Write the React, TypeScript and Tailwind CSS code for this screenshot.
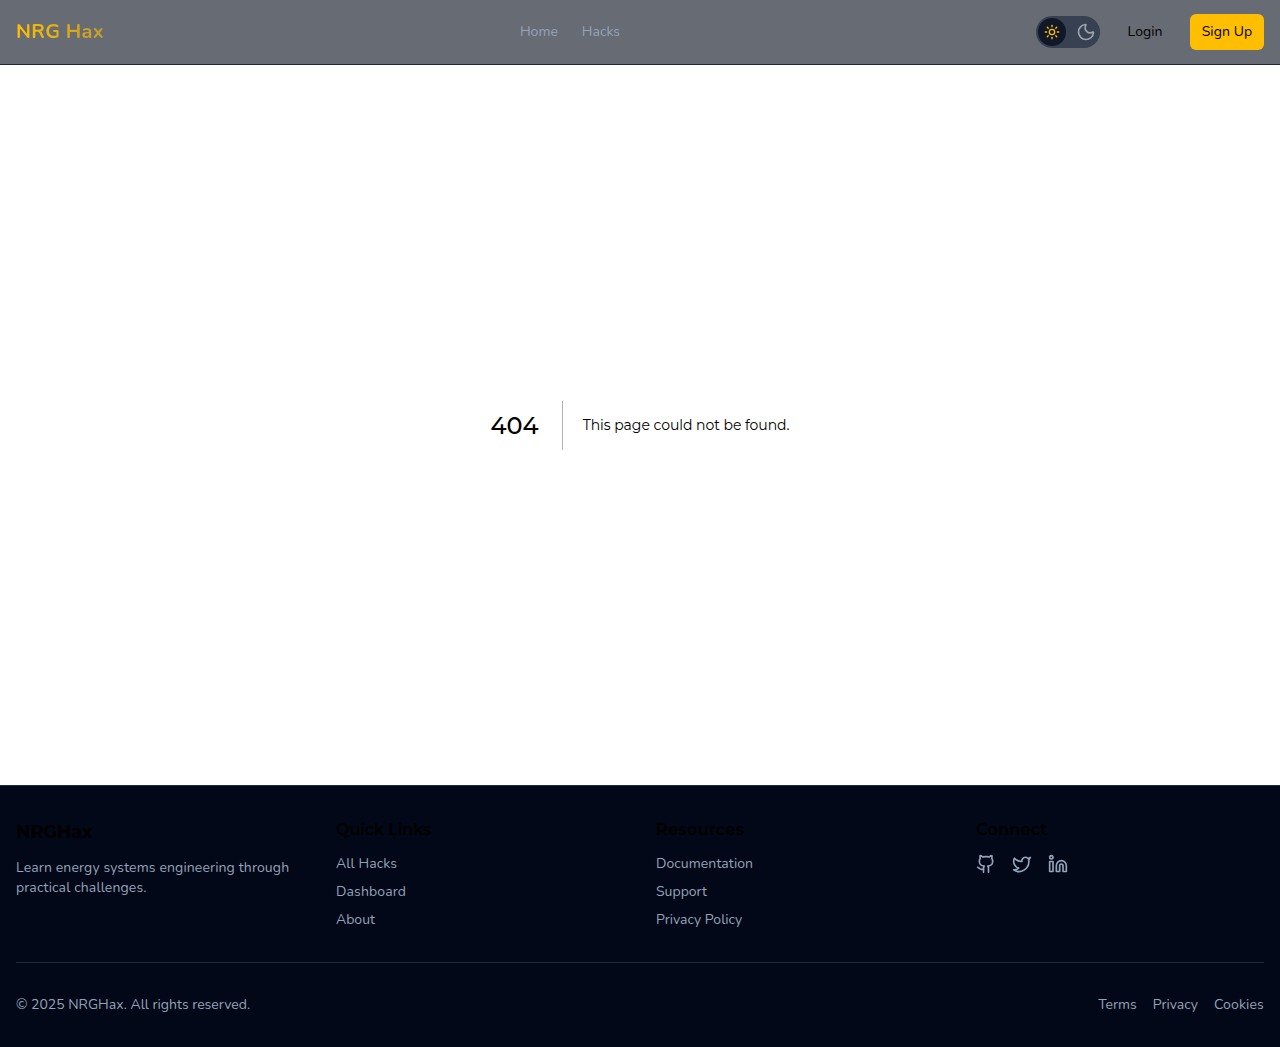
import React from 'react';
import { Github, Linkedin, Moon, Sun, Twitter } from 'lucide-react';

const columns = [
  {
    title: 'Quick Links',
    tracking: 'tracking-[-0.09px]',
    links: [
      { label: 'All Hacks', tracking: 'tracking-[0.1px]' },
      { label: 'Dashboard', tracking: 'tracking-[0.12px]' },
      { label: 'About', tracking: 'tracking-normal' },
    ],
  },
  {
    title: 'Resources',
    tracking: 'tracking-[0.36px]',
    links: [
      { label: 'Documentation', tracking: 'tracking-[0.07px]' },
      { label: 'Support', tracking: 'tracking-normal' },
      { label: 'Privacy Policy', tracking: 'tracking-normal' },
    ],
  },
];

function Header() {
  return (
    <header className="h-[65px] border-b border-[#1e293b] bg-[#676b74]">
      <div className="flex h-16 items-center justify-between px-4">
        <a href="#" className="w-[88px] whitespace-nowrap bg-gradient-to-r from-[#ffbf00] to-[#ffbf00]/60 bg-clip-text text-xl leading-7 font-bold tracking-[0.28px] text-transparent">
          NRG Hax
        </a>
        <nav className="flex items-center gap-6 text-sm text-[#94a3b8]">
          <a href="#">Home</a>
          <a href="#">Hacks</a>
        </nav>
        <div className="flex items-center gap-4">
          <button aria-label="Toggle theme" className="flex h-8 w-16 items-center rounded-full bg-[#374151] pl-0.5">
            <span className="flex size-7 items-center justify-center rounded-full bg-[#111827] text-[#ffbf00]">
              <Sun size={16} />
            </span>
            <Moon size={20} className="ml-2.5 text-[#9ca3af]" />
          </button>
          <button className="h-9 w-[58px] rounded-md text-sm text-black">Login</button>
          <button className="h-9 w-[74px] rounded-md bg-[#ffbf00] text-sm tracking-[0.1px] text-black">Sign Up</button>
        </div>
      </div>
    </header>
  );
}

function Footer() {
  return (
    <footer className="border-t border-[#1e293b] bg-[#020817] px-4 py-8 text-sm text-[#94a3b8]">
      <div className="grid grid-cols-4 gap-8">
        <div>
          <h3 className="font-[Montserrat] text-lg leading-7 font-bold tracking-[-0.3px] text-black">NRGHax</h3>
          <p className="mt-3 tracking-[0.13px]">Learn energy systems engineering through practical challenges.</p>
        </div>
        {columns.map((c) => (
          <div key={c.title}>
            <h4 className={`font-[Montserrat] text-base leading-6 font-semibold text-black ${c.tracking}`}>{c.title}</h4>
            <ul className="mt-3 space-y-2">
              {c.links.map((l) => (
                <li key={l.label} className={l.tracking}><a href="#">{l.label}</a></li>
              ))}
            </ul>
          </div>
        ))}
        <div>
          <h4 className="font-[Montserrat] text-base leading-6 font-semibold tracking-[0.25px] text-black">Connect</h4>
          <div className="mt-3 flex gap-4">
            <Github size={20} />
            <Twitter size={20} />
            <Linkedin size={20} />
          </div>
        </div>
      </div>
      <div className="mt-8 flex justify-between border-t border-[#1e293b] pt-8">
        <p>© 2025 NRGHax. All rights reserved.</p>
        <div className="flex gap-4">
          <a href="#">Terms</a>
          <a href="#">Privacy</a>
          <a href="#" className="tracking-[0.15px]">Cookies</a>
        </div>
      </div>
    </footer>
  );
}

export default function App() {
  return (
    <div className="flex min-h-screen flex-col bg-white font-[Nunito,sans-serif]">
      <Header />
      <main className="flex h-[720px] items-center justify-center font-[Montserrat,sans-serif] text-black">
        <h1 className="mr-5 border-r border-black/30 pr-[23px] text-2xl leading-[49px] font-medium">404</h1>
        <h2 className="text-sm leading-7 tracking-[-0.04px]">This page could not be found.</h2>
      </main>
      <Footer />
    </div>
  );
}
